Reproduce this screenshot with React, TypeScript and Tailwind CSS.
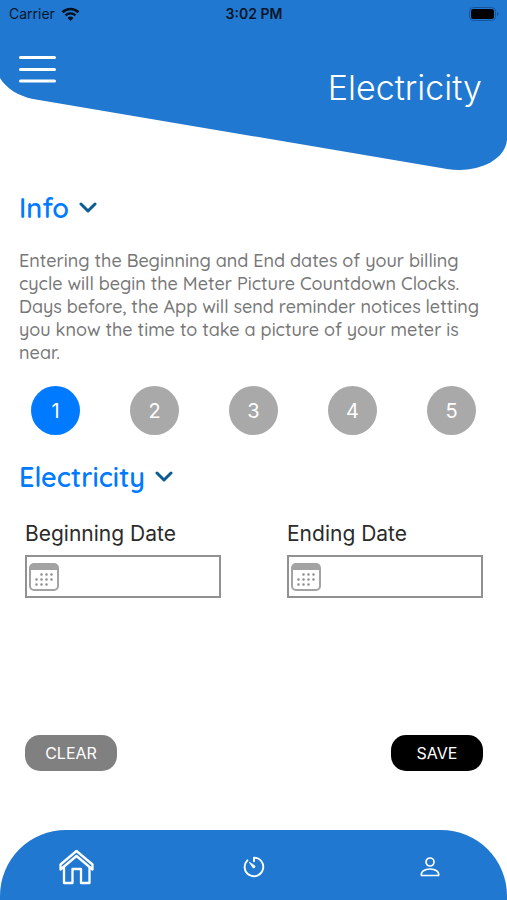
import React, { useState } from "react";

const STEPS = [1, 2, 3, 4, 5];

function CalendarIcon() {
  return (
    <svg viewBox="0 0 30 28" className="h-7 w-[30px] shrink-0" fill="none" aria-hidden="true">
      <rect x="1" y="1" width="28" height="26" rx="4" stroke="#a3a3a3" strokeWidth="2" />
      <path d="M1 7V5a4 4 0 0 1 4-4h20a4 4 0 0 1 4 4v2z" fill="#a3a3a3" />
      <path
        d="M12.500 11.500h0M17.500 11.500h0M22.500 11.500h0M7.500 16.500h0M12.500 16.500h0M17.500 16.500h0M22.500 16.500h0M7.500 21.500h0M12.500 21.500h0M17.500 21.500h0"
        stroke="#8f8f8f"
        strokeWidth="2.600"
        strokeLinecap="round"
      />
    </svg>
  );
}

interface SectionToggleProps {
  title: string;
  open: boolean;
  onToggle: () => void;
}

function SectionToggle({ title, open, onToggle }: SectionToggleProps) {
  return (
    <h2>
      <button
        type="button"
        aria-expanded={open}
        onClick={onToggle}
        className="flex items-center gap-[10px] text-[27px] leading-8 font-semibold text-[#007aff]"
      >
        {title}
        <svg viewBox="0 0 18 12" className="h-3 w-[18px]" fill="none" aria-hidden="true">
          <path d="M2 2l7 7 7-7" stroke="#0b5c94" strokeWidth="3" strokeLinecap="round" strokeLinejoin="round" />
        </svg>
      </button>
    </h2>
  );
}

interface DateFieldProps {
  id: string;
  label: string;
  value: string;
  onChange: (value: string) => void;
}

function DateField({ id, label, value, onChange }: DateFieldProps) {
  return (
    <div className="min-w-0 flex-1">
      <label htmlFor={id} className="block text-[21px] leading-7 text-[#2b2b2b]">
        {label}
      </label>
      <div className="mt-[7px] flex h-[43px] items-center border-2 border-[#919191] pl-[2px]">
        <CalendarIcon />
        <input
          id={id}
          type="text"
          value={value}
          onChange={(e) => onChange(e.target.value)}
          className="h-full w-full min-w-0 bg-transparent px-2 text-base focus:outline-none"
        />
      </div>
    </div>
  );
}

export default function App() {
  const [step, setStep] = useState(1);
  const [infoOpen, setInfoOpen] = useState(true);
  const [formOpen, setFormOpen] = useState(true);
  const [beginning, setBeginning] = useState("");
  const [ending, setEnding] = useState("");

  const handleClear = () => {
    setBeginning("");
    setEnding("");
  };

  return (
    <div className="flex min-h-screen flex-col bg-white font-['Inter','Liberation_Sans',sans-serif]">
      {/* Header with the slanted bottom edge */}
      <header className="relative h-[170px]">
        <svg
          viewBox="0 0 507 170"
          preserveAspectRatio="none"
          className="absolute inset-0 h-full w-full"
          aria-hidden="true"
        >
          <path d="M0 0H507V140C505 159 482 170 459 170Q453 170 447 169L33 99C18 96 6 88 0 78Z" fill="#2178d1" />
        </svg>

        <div className="relative">
          <div className="grid h-7 grid-cols-3 items-center pr-2 pl-[9px] text-sm text-[#05162a]">
            <div className="flex items-center gap-[6px]">
              <span>Carrier</span>
              <svg viewBox="0 0 19 14" className="h-[14px] w-[19px]" fill="none" aria-hidden="true">
                <path d="M1.500 5.200a11.500 11.500 0 0 1 16 0" stroke="#05101c" strokeWidth="2.600" />
                <path d="M4.500 8.400a7.200 7.200 0 0 1 10 0" stroke="#05101c" strokeWidth="2.400" />
                <path d="M9.500 14L6.500 11a4.300 4.300 0 0 1 6 0z" fill="#05101c" />
              </svg>
            </div>
            <span className="text-center font-semibold">3:02 PM</span>
            <svg viewBox="0 0 30 14" className="h-[14px] w-[30px] justify-self-end" fill="none" aria-hidden="true">
              <rect x="0.500" y="0.500" width="26" height="13" rx="4" stroke="#17559a" />
              <rect x="2" y="2" width="23" height="10" rx="2.500" fill="#000" />
              <path d="M28 5c2 .6 2 3.400 0 4z" fill="#17559a" />
            </svg>
          </div>

          <div className="flex items-start justify-between pt-[26px] pr-[25px] pl-[19px]">
            <button type="button" aria-label="Open menu" className="mt-[2px]">
              <svg viewBox="0 0 37 27" className="h-[27px] w-[37px]" aria-hidden="true">
                <path d="M1.500 1.500h34M1.500 13.500h34M1.500 25h34" stroke="#fff" strokeWidth="3" strokeLinecap="round" />
              </svg>
            </button>
            <h1 className="mt-3 text-[34px] leading-[44px] font-light text-white">Electricity</h1>
          </div>
        </div>
      </header>

      <main className="flex flex-1 flex-col">
        <section className="px-[19px] pt-[22px] font-['Quicksand','Lato',sans-serif]">
          <SectionToggle title="Info" open={infoOpen} onToggle={() => setInfoOpen(!infoOpen)} />
          {infoOpen && (
            <p className="mt-[25px] text-[18px] leading-[23px] font-medium text-[#777777]">
              Entering the Beginning and End dates of your billing cycle will begin the Meter Picture Countdown
              Clocks. Days before, the App will send reminder notices letting you know the time to take a picture of
              your meter is near.
            </p>
          )}
        </section>

        <div className="mt-[22px] flex justify-between px-[31px]">
          {STEPS.map((n) => (
            <button
              key={n}
              type="button"
              onClick={() => setStep(n)}
              className={`h-[49px] w-[49px] rounded-full text-xl text-white ${
                n === step ? "bg-[#007aff]" : "bg-[#a9a9a9]"
              }`}
            >
              {n}
            </button>
          ))}
        </div>

        <section className="mt-[26px]">
          <div className="px-[19px] font-['Quicksand','Lato',sans-serif]">
            <SectionToggle title="Electricity" open={formOpen} onToggle={() => setFormOpen(!formOpen)} />
          </div>
          {formOpen && (
            <div className="mt-[27px] flex gap-[66px] pr-6 pl-[25px]">
              <DateField id="beginning-date" label="Beginning Date" value={beginning} onChange={setBeginning} />
              <DateField id="ending-date" label="Ending Date" value={ending} onChange={setEnding} />
            </div>
          )}
        </section>

        <div className="mt-auto flex justify-between pt-8 pr-6 pb-[59px] pl-[25px]">
          <button
            type="button"
            onClick={handleClear}
            className="h-9 w-[92px] rounded-[15px] bg-[#808080] text-base text-white"
          >
            CLEAR
          </button>
          <button type="button" className="h-9 w-[92px] rounded-[15px] bg-black text-base text-white">
            SAVE
          </button>
        </div>
      </main>

      {/* Bottom tabs */}
      <nav className="flex h-[70px] items-center justify-between rounded-t-[66px] bg-[#2178d1] px-[59px] pt-1">
        <a href="#home" aria-label="Home" className="flex w-9 justify-center">
          <svg viewBox="0 0 36 36" className="h-9 w-9" fill="none" stroke="#fff" strokeWidth="2.300" strokeLinejoin="round" aria-hidden="true">
            <path d="M17.500 2L1.500 15.500v5l16-13.500 16 13.500v-5z" />
            <path d="M5 18v16h8.500V20h8.500v14h8.500V18" />
          </svg>
        </a>
        <a href="#timer" aria-label="Countdown" className="flex w-9 justify-center">
          <svg viewBox="0 0 22 22" className="h-[22px] w-[22px]" fill="none" stroke="#fff" strokeWidth="1.900" strokeLinecap="round" strokeLinejoin="round" aria-hidden="true">
            <path d="M4.400 4.300A9.300 9.300 0 1 0 11 1.600v3.600" />
            <path d="M6.500 6.500l3.500 5.200a1.300 1.300 0 0 0 1.800-1.800z" fill="#fff" strokeWidth="0.800" />
          </svg>
        </a>
        <a href="#account" aria-label="Account" className="flex w-9 justify-center">
          <svg viewBox="0 0 20 20" className="h-5 w-5" fill="none" stroke="#fff" strokeWidth="1.700" strokeLinejoin="round" aria-hidden="true">
            <circle cx="10" cy="5" r="4" />
            <path d="M1.500 18.500c-1.200-4 3.500-6.500 8.500-6.500s9.700 2.500 8.500 6.500z" />
          </svg>
        </a>
      </nav>
    </div>
  );
}
